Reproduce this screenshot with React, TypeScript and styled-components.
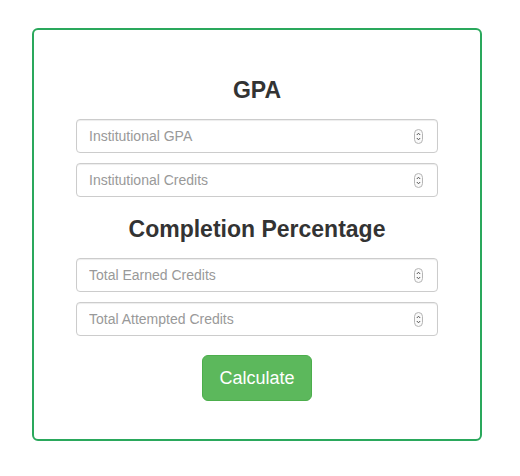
import styled, { createGlobalStyle } from "styled-components";

const GlobalStyle = createGlobalStyle`
  body {
    margin: 8px;
    background: #ffffff;
    font-family: "Liberation Sans", Arial, Helvetica, sans-serif;
    color: #333333;
  }
  * {
    box-sizing: border-box;
  }
`;

const Card = styled.form`
  display: flex;
  flex-direction: column;
  align-items: stretch;
  width: 450px;
  margin: 20px 0 0 24px;
  padding: 47px 42px 38px;
  border: 2px solid #2aa85c;
  border-radius: 6px;
`;

const Section = styled.section`
  display: flex;
  flex-direction: column;
  gap: 10px;
  margin-bottom: 19px;
`;

const Heading = styled.h3`
  margin: 0 0 6px;
  font-size: 23px;
  line-height: 26px;
  font-weight: 700;
  text-align: center;
  color: #333333;
`;

const Field = styled.label`
  display: flex;
  align-items: center;
  height: 34px;
  padding: 0 14px 0 12px;
  border: 1px solid #cccccc;
  border-radius: 4px;
  background: #ffffff;
  box-shadow: inset 0 1px 1px rgba(0, 0, 0, 0.075);
`;

const Input = styled.input`
  flex: 1;
  min-width: 0;
  border: none;
  outline: none;
  padding: 0;
  background: transparent;
  font-family: inherit;
  font-size: 14px;
  color: #555555;

  &::placeholder {
    color: #999999;
  }
`;

const Stepper = () => (
  <svg width="9" height="15" viewBox="0 0 9 15" aria-hidden="true">
    <rect x="0.5" y="0.5" width="8" height="14" rx="4" fill="#fafafa" stroke="#b5b5b5" />
    <path d="M2.8 6 L4.5 4.2 L6.2 6" fill="none" stroke="#555" strokeWidth="1" />
    <path d="M2.8 9 L4.5 10.8 L6.2 9" fill="none" stroke="#555" strokeWidth="1" />
  </svg>
);

const Actions = styled.div`
  display: flex;
  justify-content: center;
`;

const Button = styled.button`
  padding: 10px 16px;
  font-family: inherit;
  font-size: 18px;
  line-height: 24px;
  color: #ffffff;
  background: #5cb85c;
  border: 1px solid #4cae4c;
  border-radius: 6px;
  cursor: pointer;
`;

const NumberField = ({ placeholder }: { placeholder: string }) => (
  <Field>
    <Input type="text" inputMode="decimal" placeholder={placeholder} />
    <Stepper />
  </Field>
);

const groups = [
  { title: "GPA", fields: ["Institutional GPA", "Institutional Credits"] },
  {
    title: "Completion Percentage",
    fields: ["Total Earned Credits", "Total Attempted Credits"],
  },
];

export default function App() {
  return (
    <>
      <GlobalStyle />
      <Card onSubmit={(e) => e.preventDefault()}>
        {groups.map((group) => (
          <Section key={group.title}>
            <Heading>{group.title}</Heading>
            {group.fields.map((f) => (
              <NumberField key={f} placeholder={f} />
            ))}
          </Section>
        ))}
        <Actions>
          <Button type="submit">Calculate</Button>
        </Actions>
      </Card>
    </>
  );
}
